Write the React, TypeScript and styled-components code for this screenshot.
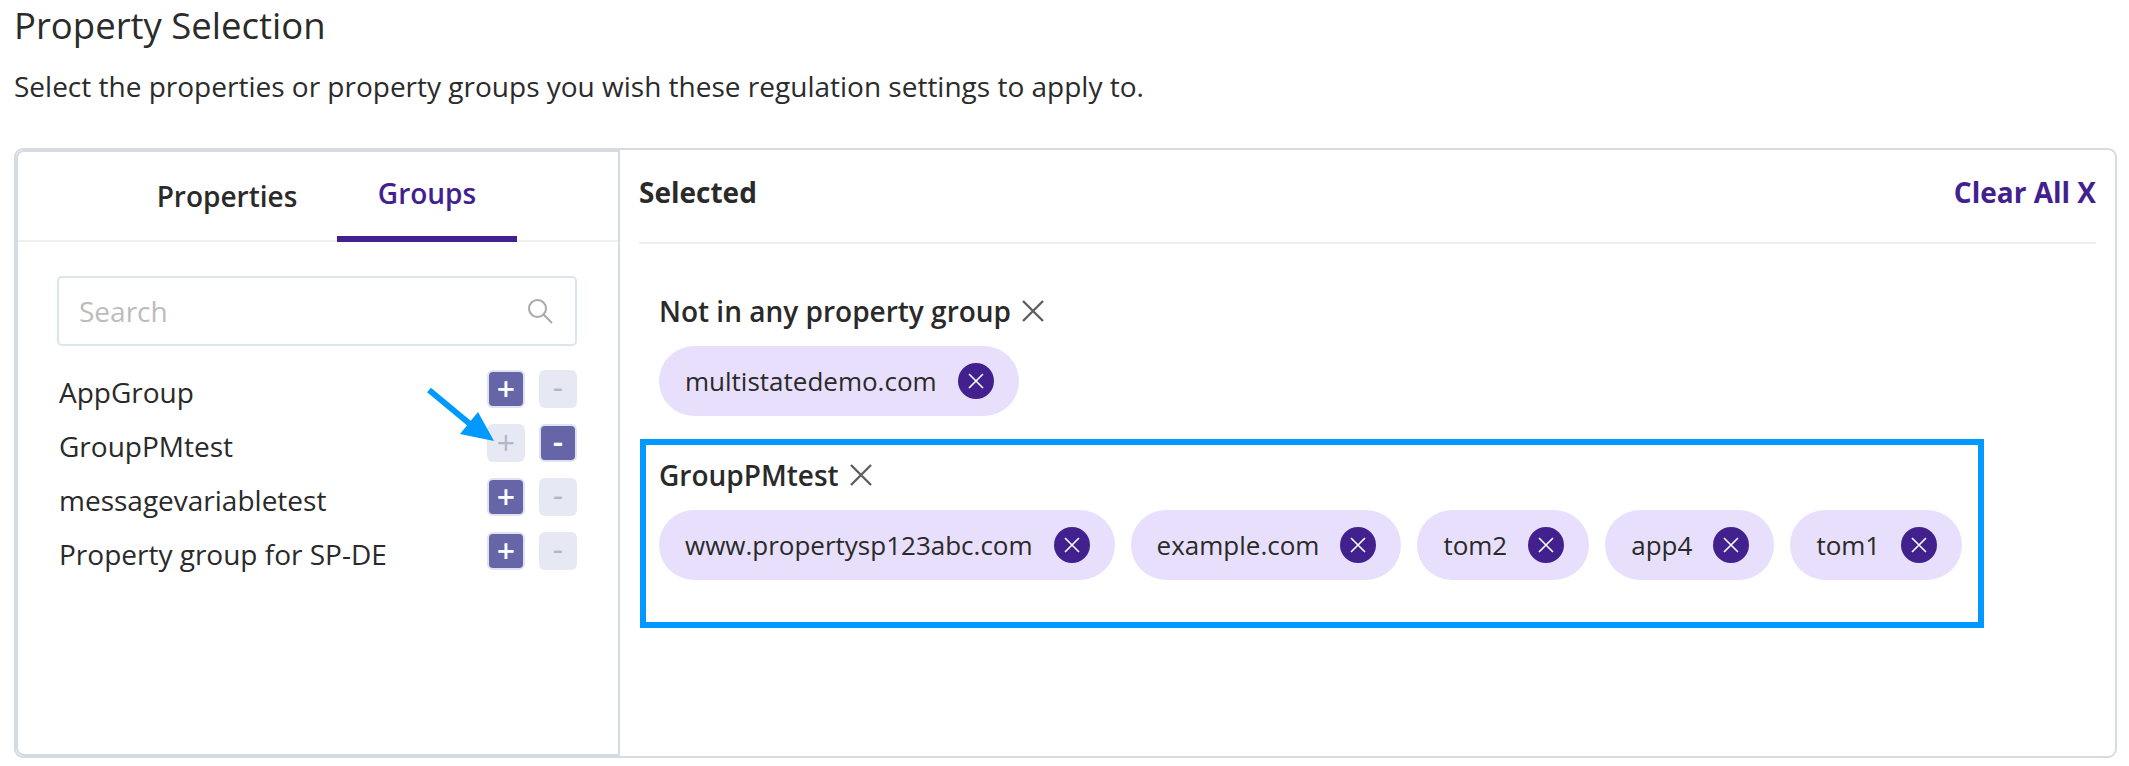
import React from "react";
import styled, { createGlobalStyle } from "styled-components";

const Global = createGlobalStyle`
  html, body { margin: 0; padding: 0; background: #fff; }
  body { font-family: "Open Sans", "Noto Sans", sans-serif; color: #2a2a2a; }
  * { box-sizing: border-box; }
`;

const Page = styled.div`
  position: relative;
  width: 2129px;
  height: 766px;
  padding: 0 12px 0 14px;
  overflow: hidden;
`;
const Title = styled.h1`
  margin: 0;
  height: 58px;
  font-size: 36.5px;
  line-height: 50px;
  font-weight: 400;
  color: #2b2b2b;
`;
const Subtitle = styled.p`
  margin: 0;
  height: 90px;
  font-size: 28px;
  line-height: 56px;
  color: #2b2b2b;
`;
const Panel = styled.div`
  display: flex;
  height: 610px;
  border: 2px solid #d5dbe0;
  border-radius: 9px;
`;
const LeftPane = styled.section`
  display: flex;
  flex-direction: column;
  width: 604px;
  border: 2px solid #d5dbe0;
  border-radius: 8px 0 0 8px;
  flex: none;
`;
const Tabs = styled.div`
  display: flex;
  height: 90px;
  padding-left: 102px;
  border-bottom: 2px solid #eeeff1;
  flex: none;
`;
const Tab = styled.div<{ $active?: boolean }>`
  display: flex;
  justify-content: center;
  width: ${(p) => (p.$active ? "180px" : "217px")};
  height: 90px;
  padding-top: ${(p) => (p.$active ? "21px" : "24px")};
  padding-right: ${(p) => (p.$active ? "0" : "3px")};
  font-size: 28px;
  line-height: 40px;
  font-weight: 600;
  color: ${(p) => (p.$active ? "#42218f" : "#2a2a2a")};
  border-bottom: ${(p) => (p.$active ? "6px solid #42218f" : "none")};
`;
const LeftBody = styled.div`
  padding: 34px 41px 0 39px;
`;
const SearchBox = styled.div`
  display: flex;
  align-items: center;
  justify-content: space-between;
  height: 70px;
  padding: 0 22px 0 20px;
  border: 2px solid #dbe5ec;
  border-radius: 5px;
`;
const Placeholder = styled.span`
  font-size: 28px;
  color: #bcbcbc;
`;
const GroupList = styled.div`
  display: flex;
  flex-direction: column;
  gap: 16px;
  margin-top: 24px;
`;
const GroupRow = styled.div`
  display: flex;
  align-items: center;
  height: 38px;
  font-size: 28px;
  color: #2a2a2a;
`;
const RowName = styled.span`
  flex: 1;
  padding: 6px 0 0 2px;
`;
const Square = styled.span<{ $on: boolean; $plus?: boolean }>`
  display: flex;
  align-items: center;
  justify-content: center;
  width: 38px;
  height: 38px;
  margin-left: ${(p) => (p.$plus ? "0" : "14px")};
  padding-bottom: ${(p) => (p.$plus ? "0" : "4px")};
  border-radius: 6px;
  font-size: 32px;
  line-height: 1;
  font-weight: ${(p) => (p.$on ? 600 : 400)};
  background: ${(p) => (p.$on ? "#6565a8" : "#e6e9f3")};
  border: ${(p) => (p.$on ? "2px solid #dfe3f0" : "none")};
  color: ${(p) => (p.$on ? "#fff" : "#b2b7c8")};
`;
const RightPane = styled.section`
  flex: 1;
  padding: 0 19px;
`;
const RightHeader = styled.div`
  display: flex;
  align-items: center;
  justify-content: space-between;
  height: 94px;
  padding-bottom: 8px;
  border-bottom: 2px solid #eeeff1;
  font-size: 28px;
  font-weight: 700;
`;
const ClearAll = styled.span`
  color: #42218f;
`;
const Group = styled.div`
  padding: 47px 20px 0 20px;
  height: 195px;
`;
const HighlightGroup = styled.div`
  width: 1344px;
  height: 189px;
  margin-left: 1px;
  padding: 10px 14px 0 13px;
  border: 6px solid #0099ff;
`;
const GroupHead = styled.div`
  display: flex;
  align-items: center;
  gap: 11px;
  height: 40px;
  font-size: 28px;
  line-height: 40px;
  font-weight: 600;
  color: #2a2a2a;
`;
const ChipRow = styled.div`
  display: flex;
  gap: 16px;
  margin-top: 15px;
`;
const Chip = styled.span`
  display: inline-flex;
  align-items: center;
  gap: 21px;
  height: 70px;
  padding: 0 25px 0 26px;
  border-radius: 35px;
  background: #e8dffc;
  font-size: 26px;
  color: #2a2a2a;
  white-space: nowrap;
`;
const ChipClose = styled.span`
  display: flex;
  align-items: center;
  justify-content: center;
  width: 36px;
  height: 36px;
  border-radius: 50%;
  background: #42218f;
  flex: none;
`;
const ArrowOverlay = styled.svg`
  position: absolute;
  left: 420px;
  top: 380px;
`;

const SearchIcon = () => (
  <svg width="26" height="26" viewBox="0 0 26 26" fill="none" stroke="#a9a9a9" strokeWidth="2">
    <circle cx="10.5" cy="10.5" r="8.5" />
    <line x1="16.5" y1="16.5" x2="25" y2="25" />
  </svg>
);
const CrossIcon = () => (
  <svg width="22" height="22" viewBox="0 0 22 22" fill="none" stroke="#5f5f5f" strokeWidth="2.4">
    <path d="M1 1 L21 21 M21 1 L1 21" />
  </svg>
);
const ChipCrossIcon = () => (
  <svg width="16" height="16" viewBox="0 0 16 16" fill="none" stroke="#fff" strokeWidth="1.6">
    <path d="M1 1 L15 15 M15 1 L1 15" />
  </svg>
);

const groups = [
  { name: "AppGroup", added: false },
  { name: "GroupPMtest", added: true },
  { name: "messagevariabletest", added: false },
  { name: "Property group for SP-DE", added: false },
];
const secondChips = ["www.propertysp123abc.com", "example.com", "tom2", "app4", "tom1"];

const ChipItem = ({ label }: { label: string }) => (
  <Chip>
    {label}
    <ChipClose>
      <ChipCrossIcon />
    </ChipClose>
  </Chip>
);

export default function App() {
  return (
    <Page>
      <Global />
      <Title>Property Selection</Title>
      <Subtitle>Select the properties or property groups you wish these regulation settings to apply to.</Subtitle>
      <Panel>
        <LeftPane>
          <Tabs>
            <Tab>Properties</Tab>
            <Tab $active>Groups</Tab>
          </Tabs>
          <LeftBody>
            <SearchBox>
              <Placeholder>Search</Placeholder>
              <SearchIcon />
            </SearchBox>
            <GroupList>
              {groups.map((g) => (
                <GroupRow key={g.name}>
                  <RowName>{g.name}</RowName>
                  <Square $plus $on={!g.added}>+</Square>
                  <Square $on={g.added}>-</Square>
                </GroupRow>
              ))}
            </GroupList>
          </LeftBody>
        </LeftPane>
        <RightPane>
          <RightHeader>
            <span>Selected</span>
            <ClearAll>Clear All X</ClearAll>
          </RightHeader>
          <Group>
            <GroupHead>
              Not in any property group
              <CrossIcon />
            </GroupHead>
            <ChipRow>
              <ChipItem label="multistatedemo.com" />
            </ChipRow>
          </Group>
          <HighlightGroup>
            <GroupHead>
              GroupPMtest
              <CrossIcon />
            </GroupHead>
            <ChipRow>
              {secondChips.map((c) => (
                <ChipItem key={c} label={c} />
              ))}
            </ChipRow>
          </HighlightGroup>
        </RightPane>
      </Panel>
      <ArrowOverlay width="90" height="70" viewBox="0 0 90 70">
        <line x1="9" y1="10" x2="50" y2="44" stroke="#0099ff" strokeWidth="6" />
        <polygon points="74,61 40,54 58,32" fill="#0099ff" />
      </ArrowOverlay>
    </Page>
  );
}
